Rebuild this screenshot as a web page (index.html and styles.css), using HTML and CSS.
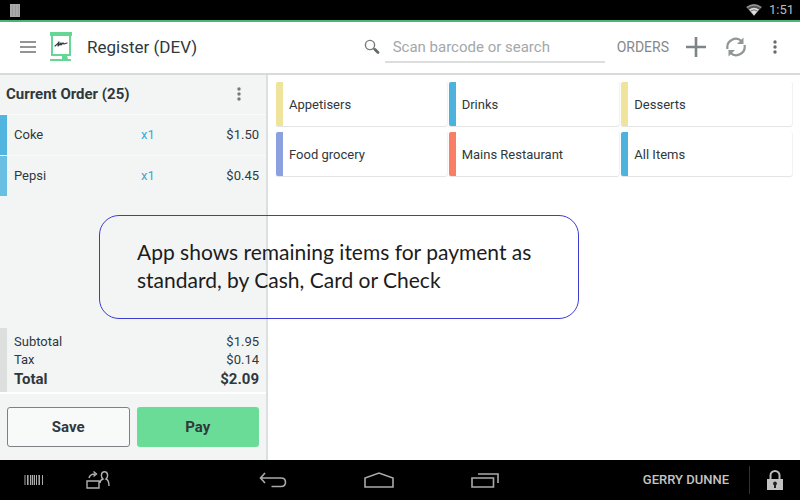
FILE: index.html
```html
<!DOCTYPE html>
<html lang="en">
<head>
<meta charset="utf-8">
<title>Register (DEV)</title>
<link rel="stylesheet" href="styles.css">
</head>
<body>
<div class="status">
  <svg width="10" height="13" viewBox="0 0 10 13" aria-hidden="true"><path fill="#aaa" d="M0 0h10v13H0z"/><path stroke="#9a9a9a" d="M2.500 1v11M5.500 1v11M8.500 1v11"/></svg>
  <div class="status-right">
    <svg width="16" height="12" viewBox="0 0 16 12" aria-hidden="true"><path fill="#555" d="M0 3Q8-3 16 3L8 12z"/><path fill="#ddd" d="M3 5.500Q8 2 13 5.500L8 11.500z"/><path fill="none" stroke="#999" stroke-width="1.300" d="M1 3.500Q8-1.500 15 3.500"/><path fill="none" stroke="#444" stroke-width=".7" d="M4.500 7Q8 4.600 11.500 7"/></svg>
    <span>1:51</span>
  </div>
</div>
<header class="bar">
  <button class="icon menu" aria-label="Menu"><svg width="16" height="12" viewBox="0 0 16 12"><path stroke="#929495" stroke-width="2" d="M0 1h16M0 6h16M0 11h16"/></svg></button>
  <svg class="logo" width="24" height="30" viewBox="0 0 24 30" aria-hidden="true"><path fill="#66d694" d="M0 0h22v4h-1v20h-4l1 3h3v2H0v-2h12v-3H1V4H0zM3 4v18h16V4z"/><path fill="none" stroke="#333b40" stroke-width="1.200" stroke-linecap="round" stroke-linejoin="round" d="M5 14q3-2 4-4l-1 4 3-3v2l2-2 1 1 3-1"/></svg>
  <h1>Register (DEV)</h1>
  <label class="search-label" for="search" aria-label="Search"><svg width="16" height="16" viewBox="0 0 16 16"><circle cx="6" cy="6" r="4.600" fill="none" stroke="#777b7d" stroke-width="1.400"/><path stroke="#777b7d" stroke-width="1.500" d="M9 9l2 2"/><path stroke="#666a6c" stroke-width="2.800" stroke-linecap="round" d="M11 10.500l3 3"/></svg></label>
  <input id="search" type="text" placeholder="Scan barcode or search">
  <button class="orders">ORDERS</button>
  <button class="icon plus" aria-label="Add"><svg width="20" height="20" viewBox="0 0 20 20"><path stroke="#7d8586" stroke-width="2.600" d="M0 10h20M10 0v20"/></svg></button>
  <button class="icon sync" aria-label="Refresh"><svg width="20" height="20" viewBox="0 0 20 20"><g fill="none" stroke="#909697" stroke-width="2.200"><path d="M1.500 12A8.500 8.500 0 0 1 15.500 4"/><path d="M18.500 8A8.500 8.500 0 0 1 4.500 16"/></g><path fill="#909697" d="M17.500 .5v6.500H11zM2.500 19.500v-6.500h6.500z"/></svg></button>
  <button class="icon more" aria-label="More options"><svg width="4" height="14" viewBox="0 0 4 14" fill="#666b6d"><circle cx="2" cy="2" r="1.700"/><circle cx="2" cy="7" r="1.700"/><circle cx="2" cy="12" r="1.700"/></svg></button>
</header>
<main>
  <section class="order">
    <div class="order-head">
      <h2>Current Order (25)</h2>
      <button class="icon" aria-label="Order options"><svg width="4" height="14" viewBox="0 0 4 14" fill="#74797b"><circle cx="2" cy="2" r="1.700"/><circle cx="2" cy="7" r="1.700"/><circle cx="2" cy="12" r="1.700"/></svg></button>
    </div>
    <ul class="lines">
      <li><span>Coke</span><span class="qty">x1</span><span class="price">$1.50</span></li>
      <li><span>Pepsi</span><span class="qty">x1</span><span class="price">$0.45</span></li>
    </ul>
    <dl class="totals">
      <div><dt>Subtotal</dt><dd>$1.95</dd></div>
      <div><dt>Tax</dt><dd>$0.14</dd></div>
      <div class="total"><dt>Total</dt><dd>$2.09</dd></div>
    </dl>
    <div class="actions">
      <button class="save">Save</button>
      <button class="pay">Pay</button>
    </div>
  </section>
  <section class="tiles">
    <button class="tile yellow">Appetisers</button>
    <button class="tile blue">Drinks</button>
    <button class="tile yellow">Desserts</button>
    <button class="tile violet">Food grocery</button>
    <button class="tile coral">Mains Restaurant</button>
    <button class="tile blue">All Items</button>
  </section>
  <p class="note">App shows remaining items for payment as standard, by Cash, Card or Check</p>
</main>
<nav class="nav">
  <div class="nav-left">
    <button class="icon" aria-label="Barcode"><svg width="20" height="10" viewBox="0 0 20 10" stroke="#aaa"><path d="M1 0v10M6.500 0v10M10.500 0v10M12.500 0v10M18.500 0v10"/><path stroke-width="1.600" d="M3.800 0v10M8.500 0v10M15.200 0v10"/></svg></button>
    <button class="icon" aria-label="Switch user"><svg width="24" height="18" viewBox="0 0 24 18" fill="none" stroke="#b0b0b0" stroke-width="1.400"><path d="M1 10h12v7H1zM3 7q1-4 6-4M7.500 .5L10.500 3 7.500 5.500M14 12q0-3 3-4-2-2-1.500-4.500Q16 .8 18.500 .8T21.500 3.500Q22 6 20 8q3 1 3 7"/></svg></button>
  </div>
  <div class="nav-mid">
    <button class="icon" aria-label="Back"><svg width="28" height="16" viewBox="0 0 28 16" fill="none" stroke="#aaa" stroke-width="1.600"><path d="M6 1L1.500 6 6 11M1.500 6H22q4.500 0 4.500 4.200T22 14.500H12.500"/></svg></button>
    <button class="icon" aria-label="Home"><svg width="30" height="16" viewBox="0 0 30 16" fill="none" stroke="#aaa" stroke-width="1.600"><path d="M1 15V6l14-5 14 5v9z"/></svg></button>
    <button class="icon" aria-label="Recent apps"><svg width="28" height="16" viewBox="0 0 28 16" fill="none" stroke="#aaa" stroke-width="1.600"><path d="M1 6h21.500v9H1zM7 2h20v9"/></svg></button>
  </div>
  <div class="nav-right">
    <span class="user">GERRY DUNNE</span>
    <button class="icon" aria-label="Lock"><svg width="16" height="20" viewBox="0 0 16 20"><path fill="none" stroke="#bbb" stroke-width="2" d="M3.500 10V5.500a4.500 4.500 0 0 1 9 0V10"/><path fill="#c2c2c2" d="M0 9h16v11H0z"/><path fill="#222" d="M8 11.500a2 2 0 0 1 1 3.700V18H7v-2.800a2 2 0 0 1 1-3.700z"/></svg></button>
  </div>
</nav>
</body>
</html>
```
FILE: styles.css
```css
* { box-sizing: border-box; }

body {
  margin: 0;
  min-height: 100vh;
  display: flex;
  flex-direction: column;
  font: 13px/18px Roboto, "Liberation Sans", sans-serif;
  color: #30383c;
  background: #fff;
}

button {
  font: inherit;
  color: inherit;
  background: none;
  border: 0;
  padding: 0;
}

svg { display: block; }
h1, h2, ul, dl, dd, p { margin: 0; padding: 0; }
.icon { flex: none; }

.status {
  display: flex;
  align-items: center;
  justify-content: space-between;
  height: 22px;
  padding: 0 6px 0 10px;
  background: #000;
  border-bottom: 2px solid #45b878;
  color: #bbb;
}
.status-right { display: flex; align-items: center; gap: 7px; }

.bar {
  display: flex;
  align-items: center;
  height: 53px;
  padding: 0 23px 2px 20px;
  border-bottom: 2px solid #d9dada;
}
.logo { margin: 0 13px 0 14px; }
.bar h1 {
  font-size: 17px;
  line-height: 24px;
  font-weight: 400;
  margin-right: auto;
}
.search-label { padding: 0 5px 0 12px; }
#search {
  width: 220px;
  height: 32px;
  padding: 2px 8px 0;
  border: 0;
  border-bottom: 2px solid #dcdddd;
  background: none;
  font: 15px/20px Roboto, sans-serif;
  color: #30383c;
}
#search::placeholder { color: #a3a8aa; opacity: 1; }
.orders { margin: 0 17px 0 12px; font-size: 14px; color: #85898b; }
.plus { margin-right: 20px; }
.sync { margin-right: 27px; }

main {
  position: relative;
  flex: 1;
  display: flex;
}

.order {
  flex: none;
  width: 33.5%;
  display: flex;
  flex-direction: column;
  background: #f3f5f5;
  border-right: 2px solid #dcdfdf;
}
.order-head {
  display: flex;
  align-items: center;
  justify-content: space-between;
  height: 39px;
  padding: 0 25px 1px 6px;
}
.order-head h2 { font-size: 15px; line-height: 20px; font-weight: 700; }

.lines { list-style: none; flex: 1; }
.lines li {
  display: grid;
  grid-template-columns: 1fr 36px 93px;
  align-items: center;
  height: 40px;
  margin-top: 1px;
  padding: 0 7px;
  border-left: 7px solid #52b5df;
  box-shadow: 0 -1px 0 #f9fafa;
}
.lines li + li { border-left-color: #68bfe3; }
.qty { text-align: center; color: #3ba9d4; }
.lines .price { text-align: right; }

.totals {
  padding: 5px 7px 3px;
  border-left: 7px solid #dddfdf;
  box-shadow: 0 2px 0 #fff;
}
.totals div { display: flex; justify-content: space-between; }
.totals .total { font-size: 15px; line-height: 20px; font-weight: 700; }

.actions {
  display: grid;
  grid-template-columns: 1fr 1fr;
  gap: 7px;
  padding: 15px 7px 13px;
}
.actions button {
  height: 40px;
  border-radius: 3px;
  font-size: 15px;
  font-weight: 700;
}
.actions .save { border: 1px solid #7d8183; background: #f8f9f9; }
.actions .pay { background: #6bdc98; }

.tiles {
  flex: 1;
  display: grid;
  grid-template-columns: repeat(3, 1fr);
  grid-auto-rows: 44px;
  gap: 6px 2px;
  align-content: start;
  padding: 7px 8px;
}
.tile {
  padding: 2px 6px 0;
  text-align: left;
  background: #fff;
  border-left: 7px solid;
  border-radius: 2px;
  box-shadow: 0 1px 1px #e2e4e4, 1px 0 0 #f3f3f3;
}
.yellow { border-left-color: #f0e49c; }
.blue { border-left-color: #4db3dd; }
.violet { border-left-color: #8c9fdf; }
.coral { border-left-color: #fa7d66; }

/* Callout that floats over both panes */
.note {
  position: absolute;
  top: 140px;
  left: 99px;
  width: 480px;
  padding: 22px 36px 24px 37px;
  border: 1px solid #3c3cd2;
  border-radius: 20px;
  font: 21px/28px Lato, "Open Sans", sans-serif;
  color: #1c1c1c;
}

.nav {
  display: grid;
  grid-template-columns: 235px auto 1fr;
  align-items: center;
  height: 40px;
  padding: 0 17px 0 24px;
  background: #000;
  color: #c4c4c4;
}
.nav-left { display: flex; align-items: center; gap: 42px; }
.nav-mid { display: flex; align-items: center; gap: 77px; }
.nav-right { display: flex; align-items: center; justify-content: flex-end; }
.user {
  padding: 5px 20px 5px 0;
  margin-right: 17px;
  border-right: 1px solid #333;
  font-weight: 500;
}
```
